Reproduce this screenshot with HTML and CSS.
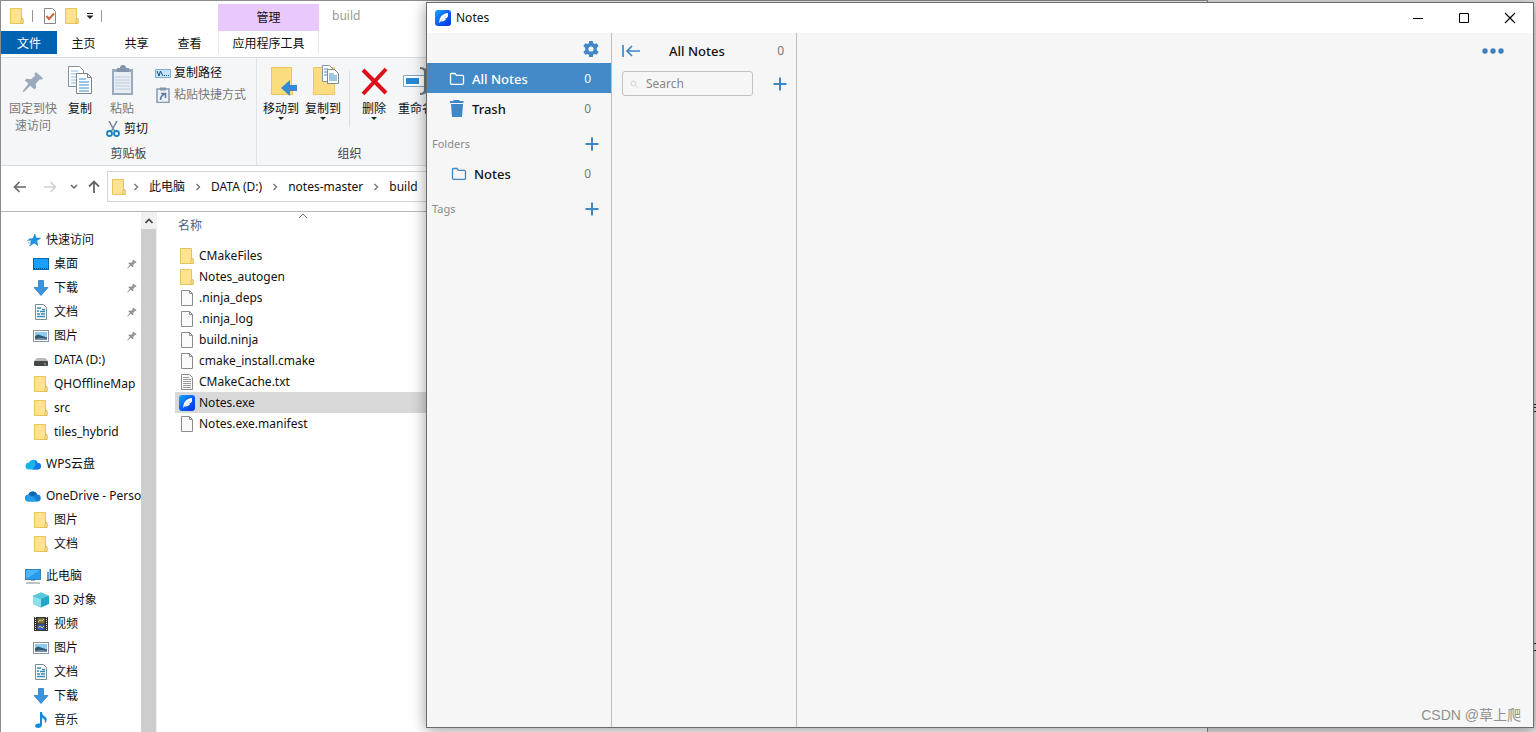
FILE: index.html
```html
<!DOCTYPE html>
<html lang="zh-CN">
<head>
<meta charset="utf-8">
<title>Notes</title>
<link rel="stylesheet" href="styles.css">
</head>
<body>
<svg class="sprite" aria-hidden="true">
  <symbol id="folder" viewBox="0 0 16 16"><path d="M1.500.5h11v11h1.500v4h-12.500z" fill="#ffe391" stroke="#e8c55c"/><path d="M12 15.500v-4l2-1v5z" fill="#fff0b8" stroke="#dfb84a"/></symbol>
  <symbol id="file" viewBox="0 0 16 16"><path d="M2.500.5h8l3 3v12h-11z" fill="#fafafa" stroke="#8c8c8c"/><path d="M10.500.5v3h3" fill="none" stroke="#8c8c8c"/></symbol>
  <symbol id="text" viewBox="0 0 16 16"><path d="M2.500.5h8l3 3v12h-11z" fill="#fafafa" stroke="#8c8c8c"/><path d="M4 3.500h6M4 5.500h8M4 7.500h8M4 9.500h8M4 11.500h8M4 13.500h8" stroke="#999"/></symbol>
  <symbol id="doc" viewBox="0 0 16 16"><path d="M2.500.5h8l3 3v12h-11z" fill="#fff" stroke="#7d8b95"/><path d="M4 4h4M9 5.500h3M4 7h2M7 7.500h5M4 10h3M8 10h4M4 12.500h8" stroke="#2b8fc0" stroke-width="1.500"/></symbol>
  <symbol id="app" viewBox="0 0 16 16"><defs><linearGradient id="blue" x1="0" y1="0" x2="1" y2="1"><stop stop-color="#16a8ff"/><stop offset=".55" stop-color="#0859f6"/><stop offset="1" stop-color="#0636dd"/></linearGradient></defs><rect width="16" height="16" rx="3" fill="url(#blue)"/><path d="M4 13Q4 9 6 6.500 9 3 13 3q.5 3-1 5l-2 .5 1 .8Q9 12 5.500 11.500L4 13z" fill="#fff"/><path d="M4.500 12.500L10.500 6" stroke="#9cc8ff" stroke-width=".7"/></symbol>
  <symbol id="star" viewBox="0 0 16 16"><path d="M9.800 2l1.200 4 4.500.2-3.800 2.600 1.100 4.700-3.600-2.600L4.800 14l1.400-4.400L3.500 7.200l4.500-.6z" fill="#1997e6" stroke="#0e79bd" stroke-width=".6"/><path d="M2 8.500h4M3 11h3M4 14l2-2" stroke="#7cc4f0"/></symbol>
  <symbol id="desk" viewBox="0 0 16 16"><rect x=".5" y="2.500" width="15" height="11" fill="#18a0fa" stroke="#0a67ae"/><path d="M1 12.500h14" stroke="#0a4f91" stroke-dasharray="1 1"/></symbol>
  <symbol id="down" viewBox="0 0 16 16"><path d="M5.500.5h5v7H15L8 15.500 1 7.500h4.500z" fill="#3a94de" stroke="#2c7cc4" stroke-width=".8"/></symbol>
  <symbol id="pic" viewBox="0 0 16 16"><rect x=".5" y="2.500" width="15" height="11" fill="#fff" stroke="#8c9297"/><path d="M2 4h12v8H2z" fill="#8ecbf3"/><path d="M2 8l3-1.500 9 3V12H2z" fill="#35566f"/><path d="M2 11q6-2 12 0v1H2z" fill="#7294aa"/></symbol>
  <symbol id="disk" viewBox="0 0 16 16"><path d="M4 6h8.500L15 9H1z" fill="#b9bcbe"/><rect x="1" y="9" width="14" height="5" rx="1" fill="#44484a"/><path d="M11 12h2" stroke="#a4dc7d"/></symbol>
  <symbol id="wps" viewBox="0 0 16 16"><path d="M4 13.500a3.500 3.500 0 010-7 4.500 4.500 0 018.500.5 3.200 3.200 0 01.5 6.500z" fill="#16b5e9"/><path d="M7 13.500q5-3 3-9.500Q12.500 4.500 12.500 7a3.200 3.200 0 01.5 6.500z" fill="#1875e8"/></symbol>
  <symbol id="one" viewBox="0 0 16 16"><path d="M3.500 13.500a3.500 3.500 0 010-7 4.500 4.500 0 018.500 0 3.500 3.500 0 01.5 7z" fill="#1381d5"/><path d="M3 7q5-1 9 6.500H3.500A3.500 3.500 0 013 7" fill="#279dea"/><path d="M3.500 6.500a4.500 4.500 0 018.500 0q-3 0-5 2-2-2-3.500-2z" fill="#0b62af"/></symbol>
  <symbol id="pc" viewBox="0 0 16 16"><rect x=".5" y="1.500" width="15" height="10" fill="#4cb6fb" stroke="#3682b5"/><path d="M1 11L15 2v9z" fill="#279bed"/><path d="M6 12.500h4" stroke="#8cb4cd"/><path d="M1 15h14" stroke="#75858f"/></symbol>
  <symbol id="cube" viewBox="0 0 16 16"><path d="M0 4l8-3.500L16 4v8l-8 3.500L0 12z" fill="#22a5c7"/><path d="M0 4l8 3v8.500L0 12z" fill="#8be0ec"/><path d="M0 4l8-3.500L16 4 8 7z" fill="#57c8dc"/></symbol>
  <symbol id="film" viewBox="0 0 16 16"><path d="M1 1h14v14H1z" fill="#333"/><path d="M2.500 1v14M13.500 1v14" stroke="#ddd" stroke-dasharray="1 1"/><path d="M4.500 2h7v5.500h-7z" fill="#776f34"/><path d="M4.500 8.500h7V14h-7z" fill="#385cb4"/><path d="M5 6l2-2 2 1 2-2M5 12l2-2 2 2 2-2" stroke="#d1cf78" fill="none"/></symbol>
  <symbol id="music" viewBox="0 0 16 16"><path d="M7 0h2q0 3 4 5.500 2 3-1.500 6Q13 7 9 6v7q-.5 3-4 3-3-.5-3-2.500Q3 11 7 11.500z" fill="#168bdc"/></symbol>
  <symbol id="pin" viewBox="0 0 24 24"><path d="M15 1l8 7-2 1.500-1.500-.5-4.500 5 .5 4.500-2 1.500-4.500-4L2 23l-1.500-1L7 14l-4-4 2-1.500 5 .5 4.500-4.500L13.500 3z" fill="currentColor"/></symbol>
  <symbol id="plus" viewBox="0 0 14 14"><path d="M7 .5v13M.5 7h13" stroke="currentColor" stroke-width="2"/></symbol>
  <symbol id="outline" viewBox="0 0 16 14"><path d="M1.500 2.500Q1.500 1.500 2.500 1.500h3.500l1.500 1.800h6q1 0 1 1v7q0 1-1 1h-11q-1 0-1-1z" fill="none" stroke="currentColor" stroke-width="1.300"/></symbol>
  <symbol id="chev" viewBox="0 0 8 10"><path d="M2.500 2l3 3-3 3" fill="none" stroke="#777" stroke-width="1.400"/></symbol>
</svg>

<main class="desktop">
<section class="explorer" aria-label="build">
  <header class="head">
    <div class="head-left">
      <div class="quick">
        <svg class="i16"><use href="#folder"/></svg><i class="bar"></i>
        <svg class="i16 check" viewBox="0 0 16 16"><path d="M2.500.5h8l3 3v12h-11z" fill="#fff" stroke="#888"/><path d="M4.500 8l2.500 3L12 5.500" fill="none" stroke="#d1603d" stroke-width="2"/></svg>
        <svg class="i16"><use href="#folder"/></svg>
        <svg class="tiny" viewBox="0 0 8 8"><path d="M1 1.500h6" stroke="#222"/><path d="M.5 3.500h7L4 7z" fill="#222"/></svg><i class="bar"></i>
      </div>
      <nav class="tabs"><button class="tab file-tab">文件</button><button class="tab">主页</button><button class="tab">共享</button><button class="tab">查看</button></nav>
    </div>
    <div class="context"><span class="manage">管理</span><button class="tab tool">应用程序工具</button></div>
    <span class="caption">build</span>
  </header>

  <div class="ribbon">
    <section class="group">
      <div class="tools">
        <button class="big pinbig dim"><svg class="i32 pinicon"><use href="#pin"/></svg><span>固定到快<br>速访问</span></button>
        <button class="big copy"><svg class="i32" viewBox="0 0 32 32"><path d="M4.500 1.500h11l4 4v16h-15z" fill="#fff" stroke="#87909a"/><path d="M7 6h7M7 9h10M7 12h10M7 15h10M7 18h10" stroke="#8bbbe5"/><path d="M12.500 8.500h11l4 4v16h-15z" fill="#fff" stroke="#7c858f"/><path d="M23.500 8.500v4h4" fill="none" stroke="#7c858f"/><path d="M15 14h7M15 17h10M15 20h10M15 23h10M15 26h10" stroke="#398bd0"/></svg><span>复制</span></button>
        <div class="stack">
          <button class="big dim"><svg class="i32" viewBox="0 0 32 32"><path d="M6 4h21v26H6z" fill="#9aaabd"/><path d="M8 7h17v21H8z" fill="#e9eef5"/><path d="M9 12h15M9 15h15M9 18h15M9 21h15M9 24h15" stroke="#bccad9"/><path d="M11 3h3a3 3 0 016 0h3v4H11z" fill="#8495aa"/></svg><span>粘贴</span></button>
          <button class="small cut"><svg class="i16" viewBox="0 0 16 16"><path d="M4 0l5.500 10M12 0L6.500 10" stroke="#71879b" stroke-width="1.500"/><circle cx="4.500" cy="12.500" r="2.500" fill="none" stroke="#1683c5" stroke-width="1.800"/><circle cx="11.500" cy="12.500" r="2.500" fill="none" stroke="#1683c5" stroke-width="1.800"/></svg>剪切</button>
        </div>
        <div class="smalls">
          <button class="small"><svg class="i16" viewBox="0 0 16 16"><path d="M.5 4.500h15v8H.5z" fill="#c5e4fa" stroke="#7faecd"/><path d="M2 6l2 5 1.500-5L8 11" fill="none" stroke="#174d7d"/><path d="M9 10.500h5" stroke="#174d7d" stroke-dasharray="1 1"/></svg>复制路径</button>
          <button class="small dim"><svg class="i16" viewBox="0 0 16 16"><path d="M2 2h12v13.500H2z" fill="#eef2f8" stroke="#8799b1" stroke-width="1.500"/><path d="M5 .5h6v3H5z" fill="#8799b1"/><path d="M5.500 13q0-4 4-6M6 6.500h4.500V11" fill="none" stroke="#607d9f" stroke-width="1.600"/></svg>粘贴快捷方式</button>
        </div>
      </div>
      <h2>剪贴板</h2>
    </section>
    <section class="group organize">
      <div class="tools">
        <button class="big"><svg class="i32" viewBox="0 0 32 32"><path d="M6.500 2.500h20v22h1v5h-21z" fill="#fbdc7f" stroke="#e8c668"/><path d="M32 20v6h-7v5l-9-8 9-8v5z" fill="#338bd5"/></svg><span>移动到</span><b class="drop"></b></button>
        <button class="big"><svg class="i32" viewBox="0 0 32 32"><path d="M6.500 2.500h21v27h-21z" fill="#fbdc7f" stroke="#e8c668"/><path d="M15.500.5h7l4 4v12h-11z" fill="#fff" stroke="#8793a0"/><path d="M20.500 4.500h7l4 4v10h-11z" fill="#fff" stroke="#7c8995"/><path d="M17 4h4M17 7h3M17 10h3M22 9h5M22 11h8M22 13h8M22 15h8" stroke="#438cc6"/></svg><span>复制到</span><b class="drop"></b></button>
        <i class="split"></i>
        <button class="big delete"><svg class="i32" viewBox="0 0 32 32"><path d="M5 5l23 23M28 4L5 29" stroke="#dc101b" stroke-width="4"/></svg><span>删除</span><b class="drop"></b></button>
        <button class="big rename"><svg class="i32" viewBox="0 0 32 32"><path d="M3.500 10.500h22v11h-22z" fill="#fff" stroke="#81a7c6"/><path d="M6 13h13v6H6z" fill="#2789d5"/><path d="M20 3q5 0 5 4v18q0 4-5 4M30 3q-5 0-5 4M25 25q0 4 5 4" fill="none" stroke="#70777c" stroke-width="2"/></svg><span>重命名</span></button>
      </div>
      <h2>组织</h2>
    </section>
  </div>

  <nav class="address">
    <button aria-label="后退"><svg class="i16" viewBox="0 0 16 16"><path d="M14 8H3M7.500 3L2.500 8l5 5" fill="none" stroke="#666" stroke-width="1.600"/></svg></button>
    <button aria-label="前进"><svg class="i16" viewBox="0 0 16 16"><path d="M2 8h11M8.500 3l5 5-5 5" fill="none" stroke="#d0d0d0" stroke-width="1.600"/></svg></button>
    <button class="recent" aria-label="最近"><svg class="tiny" viewBox="0 0 8 8"><path d="M1 2l3 3 3-3" fill="none" stroke="#666" stroke-width="1.500"/></svg></button>
    <button class="up" aria-label="向上"><svg class="i16" viewBox="0 0 16 16"><path d="M8 14V3M3 7.500l5-5 5 5" fill="none" stroke="#666" stroke-width="1.800"/></svg></button>
    <div class="path"><svg class="i16"><use href="#folder"/></svg><svg class="chev"><use href="#chev"/></svg><a href="#pc">此电脑</a><svg class="chev"><use href="#chev"/></svg><a href="#d">DATA (D:)</a><svg class="chev"><use href="#chev"/></svg><a href="#n">notes-master</a><svg class="chev"><use href="#chev"/></svg><a href="#b">build</a></div>
  </nav>

  <div class="body">
    <nav class="tree">
      <ul>
        <li class="root"><svg class="i16"><use href="#star"/></svg>快速访问</li>
        <li><svg class="i16"><use href="#desk"/></svg><span>桌面</span><svg class="pin"><use href="#pin"/></svg></li>
        <li><svg class="i16"><use href="#down"/></svg><span>下载</span><svg class="pin"><use href="#pin"/></svg></li>
        <li><svg class="i16"><use href="#doc"/></svg><span>文档</span><svg class="pin"><use href="#pin"/></svg></li>
        <li><svg class="i16"><use href="#pic"/></svg><span>图片</span><svg class="pin"><use href="#pin"/></svg></li>
        <li><svg class="i16"><use href="#disk"/></svg>DATA (D:)</li>
        <li><svg class="i16"><use href="#folder"/></svg>QHOfflineMap</li>
        <li><svg class="i16"><use href="#folder"/></svg>src</li>
        <li><svg class="i16"><use href="#folder"/></svg>tiles_hybrid</li>
      </ul>
      <ul><li class="root"><svg class="i16"><use href="#wps"/></svg>WPS云盘</li></ul>
      <ul>
        <li class="root"><svg class="i16"><use href="#one"/></svg>OneDrive - Perso</li>
        <li><svg class="i16"><use href="#folder"/></svg>图片</li>
        <li><svg class="i16"><use href="#folder"/></svg>文档</li>
      </ul>
      <ul>
        <li class="root"><svg class="i16"><use href="#pc"/></svg>此电脑</li>
        <li><svg class="i16"><use href="#cube"/></svg>3D 对象</li>
        <li><svg class="i16"><use href="#film"/></svg>视频</li>
        <li><svg class="i16"><use href="#pic"/></svg>图片</li>
        <li><svg class="i16"><use href="#doc"/></svg>文档</li>
        <li><svg class="i16"><use href="#down"/></svg>下载</li>
        <li><svg class="i16"><use href="#music"/></svg>音乐</li>
      </ul>
    </nav>
    <div class="scroll"><button aria-label="向上滚动"><svg class="tiny" viewBox="0 0 8 8"><path d="M.5 6L4 2.500 7.500 6" fill="none" stroke="#444" stroke-width="1.700"/></svg></button><div class="thumb"></div></div>
    <div class="files">
      <div class="column"><span>名称</span><svg class="sort" viewBox="0 0 10 6"><path d="M1 5l4-4 4 4" fill="none" stroke="#777"/></svg></div>
      <ul>
        <li><svg class="i16"><use href="#folder"/></svg>CMakeFiles</li>
        <li><svg class="i16"><use href="#folder"/></svg>Notes_autogen</li>
        <li><svg class="i16"><use href="#file"/></svg>.ninja_deps</li>
        <li><svg class="i16"><use href="#file"/></svg>.ninja_log</li>
        <li><svg class="i16"><use href="#file"/></svg>build.ninja</li>
        <li><svg class="i16"><use href="#file"/></svg>cmake_install.cmake</li>
        <li><svg class="i16"><use href="#text"/></svg>CMakeCache.txt</li>
        <li class="chosen"><svg class="i16"><use href="#app"/></svg>Notes.exe</li>
        <li><svg class="i16"><use href="#file"/></svg>Notes.exe.manifest</li>
      </ul>
    </div>
  </div>
</section>

<section class="notes" aria-label="Notes">
  <header class="titlebar">
    <svg class="i16"><use href="#app"/></svg><span>Notes</span>
    <div class="controls">
      <button aria-label="Minimize"><svg viewBox="0 0 12 12"><path d="M1 6.500h10" stroke="#000"/></svg></button>
      <button aria-label="Maximize"><svg viewBox="0 0 12 12"><path d="M1.500 1.500h9v9h-9z" fill="none" stroke="#000"/></svg></button>
      <button aria-label="Close"><svg viewBox="0 0 12 12"><path d="M1 1l10 10M11 1L1 11" stroke="#000" stroke-width="1.200"/></svg></button>
    </div>
  </header>
  <div class="panes">
    <nav class="sidebar">
      <div class="row gear"><button aria-label="Settings"><svg class="i16" viewBox="0 0 16 16"><path fill-rule="evenodd" d="M6.200 0h3.600l.4 2.200 1.300.8 2.300-.8 1.800 3-1.800 1.600v2.400l1.800 1.600-1.800 3-2.300-.8-1.300.8L9.800 16H6.200l-.4-2.200-1.300-.8-2.300.8-1.800-3 1.800-1.600V6.800L.4 5.200l1.800-3 2.300.8 1.300-.8zM8 5.400a2.600 2.600 0 100 5.200 2.600 2.600 0 000-5.200z" fill="currentColor"/></svg></button></div>
      <a class="row item active" href="#all"><svg class="fold"><use href="#outline"/></svg><span>All Notes</span><em>0</em></a>
      <a class="row item" href="#trash"><svg class="fold trash" viewBox="0 0 16 18"><path d="M5 0h5l1 1h3.500v2H1V1h3z" fill="currentColor"/><path d="M2 4h12l-1 13H3z" fill="currentColor"/></svg><span>Trash</span><em>0</em></a>
      <div class="row section"><span>Folders</span><button aria-label="Add folder"><svg class="plus"><use href="#plus"/></svg></button></div>
      <a class="row item nested" href="#notes"><svg class="fold"><use href="#outline"/></svg><span>Notes</span><em>0</em></a>
      <div class="row section"><span>Tags</span><button aria-label="Add tag"><svg class="plus"><use href="#plus"/></svg></button></div>
    </nav>
    <section class="list">
      <div class="list-head"><button aria-label="Collapse"><svg class="collapse" viewBox="0 0 18 14"><path d="M1 1v12M18 7H5M10 2L5 7l5 5" fill="none" stroke="currentColor" stroke-width="1.700"/></svg></button><h1>All Notes</h1><em>0</em></div>
      <div class="find"><label class="search"><svg viewBox="0 0 8 8"><circle cx="3.500" cy="3.500" r="2.500" fill="none" stroke="#d0d0d0"/><path d="M5.500 5.500l2 2" stroke="#d0d0d0"/></svg><input type="text" placeholder="Search" aria-label="Search"></label><button aria-label="New note"><svg class="plus"><use href="#plus"/></svg></button></div>
    </section>
    <section class="editor"><button aria-label="More"><svg class="more" viewBox="0 0 22 6"><circle cx="3" cy="3" r="2.700"/><circle cx="11" cy="3" r="2.700"/><circle cx="19" cy="3" r="2.700"/></svg></button></section>
  </div>
</section>
<svg class="edge edge-a" viewBox="0 0 2 10"><path d="M0 1.500h2M0 4.500h2M0 8.500h2" stroke="#222"/></svg>
<svg class="edge edge-b" viewBox="0 0 2 10"><path d="M0 1.500h2M0 8.500h2" stroke="#222"/></svg>
<span class="watermark">CSDN @草上爬</span>
</main>
</body>
</html>
```
FILE: styles.css
```css
* { box-sizing: border-box; }
body { margin: 0; font: 12px/16px "Noto Sans", "Noto Sans CJK SC", sans-serif; color: #111; }
button { border: 0; padding: 0; background: none; font: inherit; color: inherit; display: flex; align-items: center; justify-content: center; }
a { color: inherit; text-decoration: none; }
ul { margin: 0; padding: 0; list-style: none; }
em { font-style: normal; }
svg { display: block; flex: none; }
.sprite { position: absolute; width: 0; height: 0; }
.i16 { width: 16px; height: 16px; }
.i32 { width: 32px; height: 32px; }
.tiny { width: 8px; height: 8px; }

.desktop { position: relative; height: 100vh; overflow: hidden; background: #e4e4e4; }

/* File manager */
.explorer { position: absolute; top: 0; left: 0; bottom: 0; width: 1208px; display: flex; flex-direction: column; background: #fff; border: 1px solid #8c8c8c; border-bottom: 0; white-space: nowrap; }
.head { display: flex; height: 56px; flex: none; }
.head-left { width: 217px; }
.quick { display: flex; align-items: center; height: 30px; padding-left: 8px; }
.quick .bar { width: 1px; height: 12px; margin: 0 9px 0 7px; background: #999; }
.quick .check { margin-right: 6px; }
.quick .tiny { margin-left: 6px; }
.tabs { display: flex; }
.tab { width: 53px; height: 23px; padding-top: 2px; }
.file-tab { width: 56px; background: #0063b1; color: #fff; }
.context { width: 101px; padding-top: 3px; }
.manage { display: flex; align-items: center; justify-content: center; height: 27px; background: #e9c9fb; }
.tool { width: 100%; border: solid #e6e6e6; border-width: 0 1px; }
.caption { padding: 7px 13px; color: #999; }

.ribbon { display: flex; flex: none; height: 109px; background: #f5f6f7; border: solid #dadbdc; border-width: 1px 0; }
.group { display: flex; flex-direction: column; justify-content: space-between; width: 256px; padding: 7px 0 3px; border-right: 1px solid #e2e3e4; }
.group h2 { margin: 0; font: inherit; text-align: center; color: #444; }
.tools { display: flex; }
.big { flex-direction: column; justify-content: flex-start; width: 42px; line-height: 17px; }
.big .i32 { margin-bottom: 3px; }
.pinbig { width: 64px; }
.pinbig .pinicon { width: 22px; height: 22px; margin: 6px 0 7px; color: #9ba9bc; }
.copy { width: 30px; }
.dim { color: #777; }
.stack { width: 60px; padding-left: 6px; }
.small { gap: 3px; height: 22px; }
.cut { margin: 1px 0 0 4px; }
.smalls { display: flex; flex-direction: column; align-items: flex-start; margin-top: -3px; }
.organize { width: 186px; }
.organize .tools { padding-left: 3px; }
.drop { border: solid transparent; border-width: 3px 3px 0; border-top-color: #222; }
.split { width: 1px; height: 56px; margin: 6px 3px 0 5px; background: #dedfe0; }

.address { display: flex; align-items: center; flex: none; height: 46px; padding: 0 0 4px 11px; gap: 14px; border-bottom: 1px solid #b8b8b8; }
.address .recent { margin-left: -2px; }
.address .up { margin-left: -6px; }
.path { display: flex; align-items: center; flex: 1; height: 31px; margin-left: -9px; padding-left: 3px; border: 1px solid #d5d5d5; }
.path .chev { width: 8px; height: 10px; margin: 0 9px; }
.path .i16 + .chev { margin-left: 5px; }

.body { display: flex; flex: 1; min-height: 0; }
.tree { width: 140px; padding-top: 16px; overflow: hidden; }
.tree ul { margin-bottom: 8px; }
.tree li { display: flex; align-items: center; gap: 5px; height: 24px; padding-left: 32px; }
.tree .root { padding-left: 24px; }
.tree .pin { width: 10px; height: 10px; margin: 0 4px 0 auto; color: #8d949b; }
.scroll { display: flex; flex-direction: column; width: 16px; border-right: 1px solid #f0f0f0; background: #f0f0f0; }
.scroll button { height: 17px; }
.thumb { flex: 1; background: #cdcdcd; }
.files { flex: 1; padding-left: 18px; }
.column { display: flex; height: 33px; padding: 6px 0 0 3px; color: #4c607a; }
.sort { width: 10px; height: 6px; margin: -5px 0 0 96px; }
.files li { display: flex; align-items: center; gap: 4px; height: 21px; padding-left: 4px; }
.files .chosen { background: #d9d9d9; }

/* Notes window */
.notes { position: absolute; top: 2px; left: 426px; right: 2px; bottom: 4px; display: flex; flex-direction: column; background: #f6f6f6; border: 1px solid #6c6c6c; box-shadow: 0 2px 14px rgba(0, 0, 0, .4); font-size: 13px; }
.titlebar { display: flex; align-items: center; gap: 5px; height: 30px; padding-left: 8px; background: #fff; font-size: 12px; }
.controls { display: flex; margin-left: auto; }
.controls button { width: 46px; height: 30px; }
.controls svg { width: 12px; height: 12px; }
.panes { display: flex; flex: 1; }
.panes button { color: #3f87c6; }
.sidebar { width: 185px; border-right: 1px solid #bcbcbc; }
.row { display: flex; align-items: center; height: 30px; }
.gear { justify-content: flex-end; padding: 2px 12px 0 0; }
.item { gap: 7px; padding: 2px 20px 0 22px; font-weight: 500; }
.item em { margin-left: auto; font-size: 12px; font-weight: 400; color: #777; }
.nested { padding-left: 24px; }
.item .fold { width: 16px; height: 14px; color: #3f87c6; }
.item .trash { height: 18px; }
.item.active, .active em, .active .fold { color: #fff; }
.item.active { background: #438ac9; }
.section { justify-content: space-between; margin-top: 5px; padding: 2px 12px 0 5px; font-size: 11px; color: #8b8b8b; }
.plus { width: 14px; height: 14px; }
.list { width: 185px; padding: 3px 9px 0 10px; border-right: 1px solid #bcbcbc; }
.list-head { display: flex; align-items: center; height: 30px; padding-right: 3px; }
.list-head h1 { margin: 0 auto 0 29px; font: inherit; font-weight: 500; }
.list-head em { font-size: 12px; color: #777; }
.collapse { width: 18px; height: 14px; }
.find { display: flex; align-items: center; justify-content: space-between; margin-top: 5px; }
.search { display: flex; align-items: center; gap: 8px; width: 131px; height: 25px; padding-left: 7px; border: 1px solid #c2c2c2; border-radius: 3px; }
.search svg { width: 8px; height: 8px; }
.search input { width: 90px; padding: 0; border: 0; outline: 0; background: none; font: inherit; font-size: 12px; }
.search input::placeholder { color: #888; opacity: 1; }
.editor { display: flex; flex: 1; align-items: flex-start; justify-content: flex-end; padding: 15px 29px; }
.more { width: 22px; height: 6px; fill: #3f7fc0; }
.edge { position: absolute; right: 0; width: 2px; height: 10px; }
.edge-a { top: 403px; }
.edge-b { top: 642px; }
.watermark { position: absolute; right: 15px; bottom: 7px; font: 14px/20px "Liberation Sans", "Noto Sans CJK SC", sans-serif; color: #909090; }
```
